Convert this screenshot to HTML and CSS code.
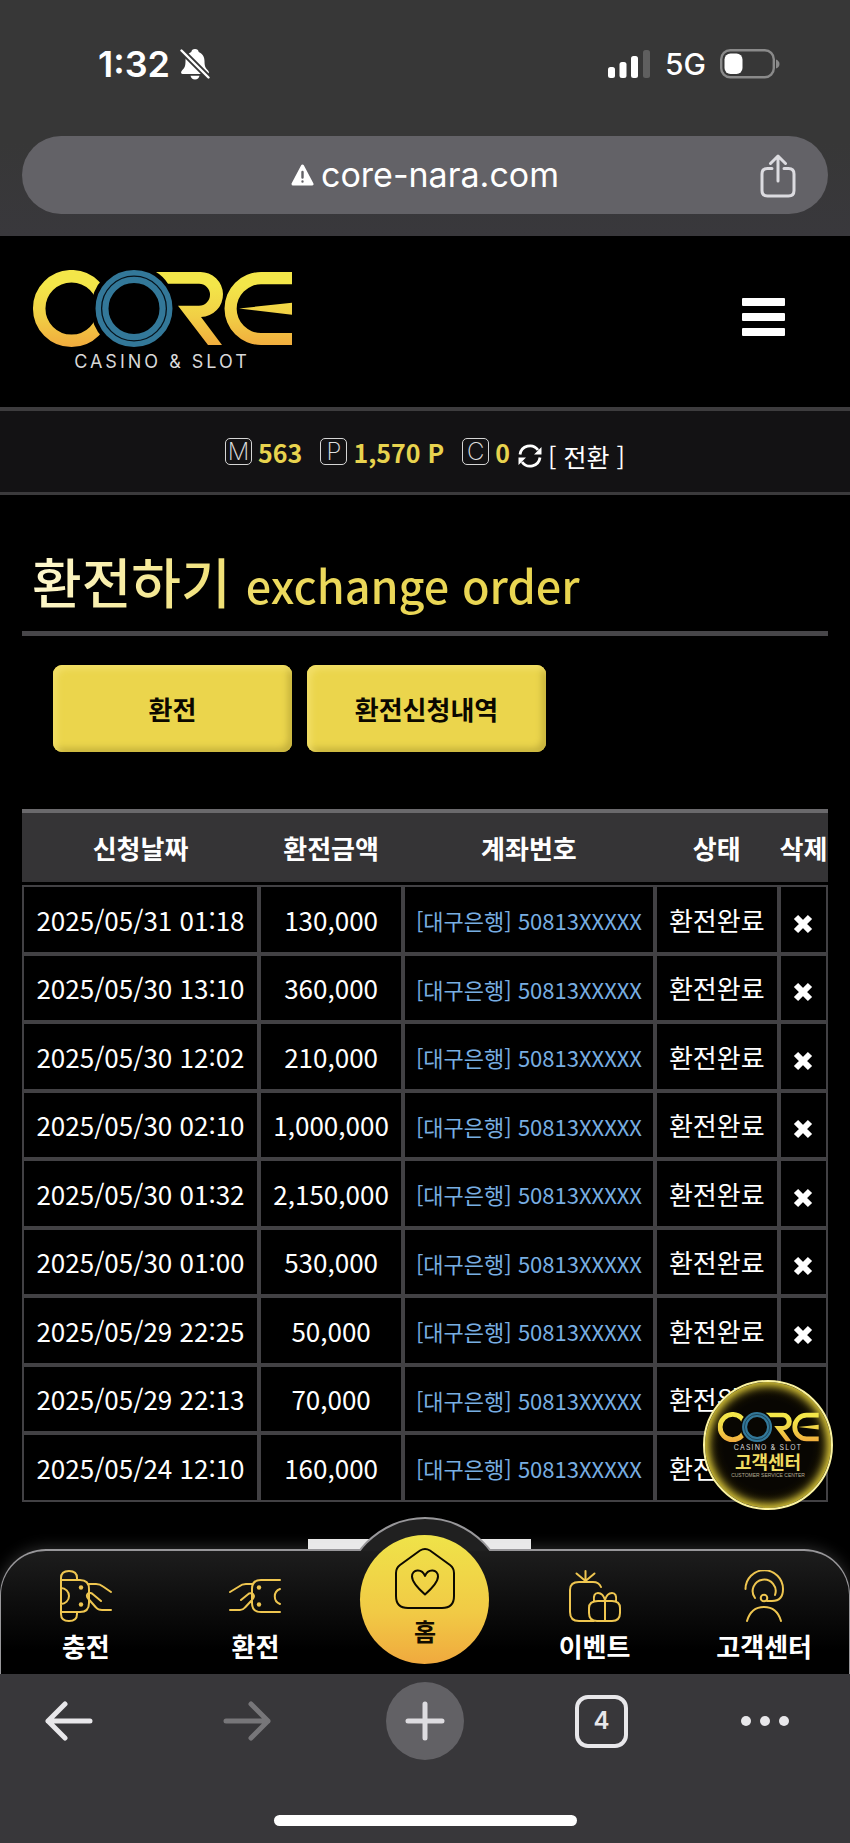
FILE: index.html
```
<!DOCTYPE html>
<html lang="ko">

<head>
  <meta charset="UTF-8" />
  <meta name="viewport" content="width=device-width, initial-scale=1.0" />
  <title>CORE - 환전하기</title>
  <link rel="stylesheet" href="styles.css">
</head>

<body>
  <!-- Shared logo -->
  <svg class="defs" aria-hidden="true">
    <defs>
      <linearGradient id="gold" gradientUnits="userSpaceOnUse" x1="0" y1="0" x2="0" y2="77">
        <stop offset="0.2" stop-color="#f3e649" />
        <stop offset="0.6" stop-color="#f1cf45" />
        <stop offset="1" stop-color="#f1ab3d" />
      </linearGradient>
      <mask id="cut" maskUnits="userSpaceOnUse" x="0" y="0" width="90" height="80">
        <rect width="90" height="80" fill="#fff" />
        <circle cx="102" cy="38.5" r="43" fill="#000" />
      </mask>
      <symbol id="logo" viewBox="0 0 260 100">
        <circle cx="39.5" cy="38.5" r="32.3" fill="none" stroke="url(#gold)" stroke-width="12.5" mask="url(#cut)" />
        <circle cx="102" cy="38.5" r="32" fill="none" stroke="#337899" stroke-width="13" />
        <circle cx="102" cy="38.5" r="32.4" fill="none" stroke="#06131c" stroke-width="1.3" />
        <path fill="url(#gold)" d="M124 2H168A22.5 22.5 0 0 1 169 47L190 75H176L146 35.7H167A11 11 0 0 0 167 13.7H136Q131 6 124 2Z" />
        <path fill="url(#gold)" d="M260 2H229A36.5 36.5 0 0 0 229 75H260V63H229A24.3 24.3 0 0 1 229 14.3H260ZM207 38.5L260 32.7V44.7Z" />
        <text class="logo-sub" x="130" y="98" text-anchor="middle">CASINO &amp; SLOT</text>
      </symbol>
    </defs>
  </svg>

  <!-- Browser top -->
  <div class="browser-top">
    <div class="status">
      <div class="clock">
        <span>1:32</span>
        <svg width="30" height="32" viewBox="0 0 30 32">
          <path fill="#fff" d="M15 1C12.800 1 11.500 2 11.300 4C7.500 5.500 5.500 9 5.500 13C5.500 18.500 4.500 20 2 22.500C.5 24 .8 26 2.800 26H27.200C29.200 26 29.500 24 28 22.500C25.500 20 24.500 18.500 24.500 13C24.500 9 22.500 5.500 18.700 4C18.500 2 17.200 1 15 1ZM10.500 27.800H19.500C19 30 17.500 31.500 15 31.500S11 30 10.500 27.800Z" />
          <path stroke="#373737" stroke-width="6" d="M1 2L29 30" />
          <path stroke="#fff" stroke-width="2.400" stroke-linecap="round" d="M1.500 2.500L28.500 29.500" />
        </svg>
      </div>
      <div class="signal">
        <svg width="43" height="28" viewBox="0 0 43 28" fill="#fff">
          <rect y="17" width="7" height="11" rx="2.500" />
          <rect x="11.500" y="12" width="7" height="16" rx="2.500" />
          <rect x="23" y="6" width="7" height="22" rx="2.500" />
          <rect x="35" width="7" height="28" rx="2.500" fill="#5f5f5f" />
        </svg>
        <span>5G</span>
        <svg width="60" height="30" viewBox="0 0 60 30">
          <rect x="1.200" y="1.200" width="52.600" height="27" rx="9" fill="none" stroke="#8a8a8a" stroke-width="2.400" />
          <rect x="4.500" y="4.500" width="18" height="20.500" rx="6" fill="#fff" />
          <path fill="#8a8a8a" d="M56 10.500Q59.500 12 59.500 15T56 19.500Z" />
        </svg>
      </div>
    </div>
    <div class="address">
      <svg width="23" height="22" viewBox="0 0 23 22">
        <path fill="#fff" stroke="#fff" stroke-width="3" stroke-linejoin="round" d="M11.500 2L21 20H2Z" />
        <path stroke="#636267" stroke-width="2.400" stroke-linecap="round" d="M11.500 8V13.500M11.500 17.500V17.600" />
      </svg>
      <span>core-nara.com</span>
      <button class="share" aria-label="공유">
        <svg width="36" height="44" viewBox="0 0 36 44" fill="none" stroke="#dcdbe0" stroke-width="3" stroke-linecap="round" stroke-linejoin="round">
          <path d="M12 14.500H7.500Q2 14.500 2 20V36.500Q2 42 7.500 42H28.500Q34 42 34 36.500V20Q34 14.500 28.500 14.500H24M18 27V2.500M10.500 9.500L18 2L25.500 9.500" />
        </svg>
      </button>
    </div>
  </div>

  <!-- Page -->
  <div class="page">
    <header class="header">
      <a href="#" aria-label="CORE"><svg class="logo"><use href="#logo" /></svg></a>
      <button class="menu" aria-label="메뉴"><i></i><i></i><i></i></button>
    </header>

    <div class="wallet">
      <div class="point"><span class="mark">M</span><b>563</b></div>
      <div class="point"><span class="mark">P</span><b>1,570 P</b></div>
      <div class="point"><span class="mark">C</span><b>0</b></div>
      <button class="convert">
        <svg width="24" height="24" viewBox="0 0 24 24">
          <path fill="none" stroke="#fff" stroke-width="2.800" d="M2 10.500A10 10 0 0 1 20 6M22 13.500A10 10 0 0 1 4 18" />
          <path fill="#fff" d="M23.500 3V10.500H16ZM.5 21V13.500H8Z" />
        </svg>
        <span>[ 전환 ]</span>
      </button>
    </div>

    <main class="content">
      <h1 class="title"><span>환전하기 <small>exchange order</small></span></h1>

      <div class="tabs">
        <button>환전</button>
        <button>환전신청내역</button>
      </div>

      <table class="list">
        <colgroup>
          <col class="c-date"><col class="c-money"><col class="c-bank"><col class="c-state"><col class="c-del">
        </colgroup>
        <thead>
          <tr><th>신청날짜</th><th>환전금액</th><th>계좌번호</th><th>상태</th><th>삭제</th></tr>
        </thead>
        <tbody id="rows"></tbody>
      </table>

      <div class="paging"></div>
    </main>
  </div>

  <!-- Bottom menu -->
  <div class="dock">
    <a class="center-link" href="#">
      <svg class="center-logo"><use href="#logo" /></svg>
      <strong>고객센터</strong>
      <small>CUSTOMER SERVICE CENTER</small>
    </a>
    <div class="hump"></div>
    <nav class="nav">
      <a href="#">
        <svg width="52" height="52" viewBox="0 0 52 52">
          <path d="M1 10H20Q29 10 29 19V33Q29 42 20 42H1ZM1 10V8Q1 1 9 1T17 8V10M1 42V44Q1 51 9 51T17 44V42M1 18A8 8 0 0 1 1 34M28 14H36Q40 14 43 16.500L51 22M41 31L32 23.500Q28 21.500 27 25Q26.500 27 28.500 29L36 37.500Q38 40 42 40H51" />
          <g class="dot"><circle cx="21" cy="17.500" r="2.200" /><circle cx="21" cy="34.500" r="2.200" /></g>
        </svg>
        <span>충전</span>
      </a>
      <a href="#">
        <svg width="52" height="52" viewBox="0 0 52 52">
          <path d="M51 10H32Q23 10 23 19V33Q23 42 32 42H51M51 19A8 8 0 0 0 51 34M24 14H17Q13 14 10 16.500L1 22M12 30L20 23.500Q24 22.500 25 26Q25 28 23 30L16 37.500Q14 40 11 40H1" />
          <g class="dot"><circle cx="30" cy="17.500" r="2.200" /><circle cx="30" cy="34.500" r="2.200" /></g>
        </svg>
        <span>환전</span>
      </a>
      <a class="home" href="#">
        <svg width="62" height="62" viewBox="0 0 62 62">
          <path d="M6 18L26 3.500Q31 .5 36 3.500L56 18Q60 21 60 26V49Q60 61 48 61H14Q2 61 2 49V26Q2 21 6 18ZM31 47.500Q18 36 18 29.500C18 22 28 21 31 29C34 21 44 22 44 29.500Q44 36 31 47.500Z" />
        </svg>
        <span>홈</span>
      </a>
      <a href="#">
        <svg width="52" height="52" viewBox="0 0 52 52">
          <path d="M25 51H10Q1 51 1 42V20Q1 12 10 12H24Q30 12 32 17M16.500 11V1M16.500 11L7.500 3.500M16.500 11L25.500 3.500M29 31H43Q51 31 51 38V43Q51 51 43 51H28Q20 51 20 43V38Q20 31 29 31ZM36 31V51M36 30Q34 23 29 23T25 31M36 30Q38 23 43 23T47 31" />
        </svg>
        <span>이벤트</span>
      </a>
      <a href="#">
        <svg width="52" height="52" viewBox="0 0 52 52">
          <path d="M7.500 19A18.500 18.500 0 0 1 45 19C45 27 41 31 34 31H29M17 28A11.500 11.500 0 1 1 37 25M9 51Q13 37 26 37T43 51" />
          <circle cx="26" cy="28" r="3.300" />
        </svg>
        <span>고객센터</span>
      </a>
    </nav>
  </div>

  <!-- Browser bottom -->
  <div class="browser-bottom">
    <div class="tools">
      <div class="side left">
        <button aria-label="뒤로">
          <svg width="48" height="40" viewBox="0 0 48 40" fill="none" stroke="#e8e7ea" stroke-width="5" stroke-linecap="round" stroke-linejoin="round"><path d="M45 20H3M20 3L3 20L20 37" /></svg>
        </button>
        <button aria-label="앞으로">
          <svg width="48" height="40" viewBox="0 0 48 40" fill="none" stroke="#777679" stroke-width="5" stroke-linecap="round" stroke-linejoin="round"><path d="M3 20H45M28 3L45 20L28 37" /></svg>
        </button>
      </div>
      <button class="plus" aria-label="새 탭">
        <svg width="40" height="40" viewBox="0 0 40 40" stroke="#dddce0" stroke-width="5" stroke-linecap="round"><path d="M20 3V37M3 20H37" /></svg>
      </button>
      <div class="side right">
        <button class="count">4</button>
        <button aria-label="더보기">
          <svg width="48" height="40" viewBox="0 0 48 40" fill="#e8e7ea"><circle cx="5" cy="20" r="5" /><circle cx="24" cy="20" r="5" /><circle cx="43" cy="20" r="5" /></svg>
        </button>
      </div>
    </div>
    <div class="indicator"></div>
  </div>

  <script>
    const orders = [
      ["2025/05/31 01:18", "130,000"],
      ["2025/05/30 13:10", "360,000"],
      ["2025/05/30 12:02", "210,000"],
      ["2025/05/30 02:10", "1,000,000"],
      ["2025/05/30 01:32", "2,150,000"],
      ["2025/05/30 01:00", "530,000"],
      ["2025/05/29 22:25", "50,000"],
      ["2025/05/29 22:13", "70,000"],
      ["2025/05/24 12:10", "160,000"]
    ];

    document.getElementById("rows").innerHTML = orders.map(([date, money]) => `
      <tr>
        <td>${date}</td>
        <td>${money}</td>
        <td><a href="#">[대구은행] 50813XXXXX</a></td>
        <td>환전완료</td>
        <td><button aria-label="삭제"><svg width="20" height="20" viewBox="0 0 20 20"><path d="M3 3L17 17M17 3L3 17" /></svg></button></td>
      </tr>`).join("");
  </script>
</body>

</html>
```

FILE: styles.css
```
* {
  box-sizing: border-box;
  margin: 0;
  padding: 0;
}

body {
  display: flex;
  flex-direction: column;
  height: 100vh;
  background-color: #000;
  color: #fff;
  font-family: 'Noto Sans CJK KR', sans-serif;
  font-size: 26px;
  line-height: 36px;
}

a {
  color: inherit;
  text-decoration: none;
}

button {
  border: none;
  background: none;
  color: inherit;
  font: inherit;
  cursor: pointer;
}

svg {
  display: block;
}

.defs {
  position: absolute;
  width: 0;
  height: 0;
}

/* Browser top */
.browser-top {
  flex: none;
  height: 236px;
  padding: 44px 22px 0;
  background: linear-gradient(#373737 60%, #39383c);
  font-family: Inter, sans-serif;
}

.status {
  display: flex;
  justify-content: space-between;
  align-items: center;
  height: 40px;
  margin-bottom: 52px;
  padding: 0 48px 0 76px;
}

.clock,
.signal {
  display: flex;
  align-items: center;
}

.clock {
  gap: 10px;
  font-size: 36px;
  font-weight: 600;
}

.signal {
  gap: 14px;
  font-size: 30px;
  font-weight: 500;
}

.address {
  position: relative;
  display: flex;
  justify-content: center;
  align-items: center;
  gap: 7px;
  height: 78px;
  border-radius: 39px;
  background-color: #636267;
  font-size: 34px;
}

.share {
  position: absolute;
  top: 18px;
  right: 32px;
}

/* Header */
.page {
  flex: 1;
  min-height: 0;
  overflow-y: auto;
  scrollbar-width: none;
}

.header {
  display: flex;
  justify-content: space-between;
  align-items: flex-start;
  height: 175px;
  padding: 34px 65px 0 32px;
  border-bottom: 4px solid #3d3c3e;
}

.logo {
  width: 260px;
  height: 100px;
}

.logo-sub {
  fill: #d8d8d8;
  font-family: Inter, sans-serif;
  font-size: 18px;
  letter-spacing: 3px;
}

.menu {
  display: grid;
  gap: 7px;
  margin-top: 28px;
}

.menu i {
  width: 43px;
  height: 8px;
  border-radius: 1px;
  background-color: #fff;
}

/* Wallet */
.wallet {
  display: flex;
  justify-content: center;
  align-items: center;
  height: 84px;
  border-bottom: 3px solid #3b3a3c;
  background-color: #131214;
}

.point {
  display: flex;
  align-items: center;
  gap: 6px;
  margin-right: 18px;
}

.point:nth-child(3) {
  margin-right: 8px;
}

.point b {
  color: #e8d34e;
  font-size: 25px;
  font-weight: 700;
}

.mark {
  width: 27px;
  height: 27px;
  border: 1px solid #d5d5d5;
  border-radius: 5px;
  color: #e0e0e0;
  font-family: Inter, sans-serif;
  font-size: 24px;
  font-weight: 200;
  line-height: 25px;
  text-align: center;
}

.convert {
  display: flex;
  align-items: center;
  gap: 6px;
  padding-top: 8px;
  font-size: 25px;
}

/* Content */
.content {
  padding: 0 22px;
}

.title {
  height: 141px;
  padding: 46px 10px 0;
  border-bottom: 5px solid #474649;
  font-size: 54px;
  font-weight: 500;
  line-height: 80px;
}

.title span {
  background: linear-gradient(100deg, #fff9d2, #ecd95d 45%, #e8d44e);
  -webkit-background-clip: text;
  background-clip: text;
  color: transparent;
}

.title small {
  font-size: 45px;
}

.tabs {
  display: flex;
  gap: 15px;
  padding: 29px 31px 57px;
}

.tabs button {
  width: 239px;
  height: 87px;
  border-radius: 9px;
  background-color: #ebd54c;
  box-shadow: inset 4px 4px 6px #f2df68, inset -4px -4px 6px #c6b23d;
  color: #0b0800;
  font-weight: 700;
}

/* Order list */
.list {
  width: 100%;
  border-spacing: 0;
  border-top: 4px solid #6a696c;
  table-layout: fixed;
  text-align: center;
  white-space: nowrap;
}

.c-date {
  width: 29.4%;
}

.c-money {
  width: 17.9%;
}

.c-bank {
  width: 31.2%;
}

.c-state {
  width: 15.4%;
}

.c-del {
  width: 6.1%;
}

.list th {
  height: 72px;
  border-bottom: 3px solid #000;
  background-color: #353436;
  font-weight: 700;
}

.list td {
  height: 68px;
  border: 2px solid #424144;
}

.list tr:nth-child(odd) td {
  height: 69px;
}

.list td a {
  color: #78aee2;
  font-size: 22px;
}

.list td button {
  display: block;
  margin: 8px auto 0;
}

.list td svg {
  stroke: #fff;
  stroke-width: 6;
}

.paging {
  width: 235px;
  height: 60px;
  margin: 37px auto 0;
  padding-right: 12px;
  background-color: #e8e8e8;
  background-clip: content-box;
}

/* Bottom menu */
.dock {
  position: relative;
  flex: none;
}

.nav {
  display: grid;
  grid-template-columns: repeat(5, 1fr);
  height: 125px;
  padding-top: 19px;
  border: 1px solid #98979a;
  border-top-width: 2px;
  border-bottom: none;
  border-radius: 46px 46px 0 0;
  background: linear-gradient(#1d1d1d, #000 80%);
  box-shadow: 0 0 16px rgba(255, 255, 255, 0.2);
}

.nav a {
  display: flex;
  flex-direction: column;
  align-items: center;
  gap: 6px;
  font-weight: 700;
}

.nav svg {
  fill: none;
  stroke: #efc650;
  stroke-width: 2;
  stroke-linecap: round;
  stroke-linejoin: round;
}

.nav .dot {
  fill: #efc650;
  stroke: none;
}

/* rounded top behind the home button */
.hump {
  position: absolute;
  top: -32px;
  left: calc(50% - 84px);
  z-index: 1;
  width: 168px;
  height: 34px;
  overflow: hidden;
}

.hump::before {
  content: "";
  display: block;
  height: 168px;
  border: 2px solid #98979a;
  border-radius: 50%;
  background-color: #202020;
}

.nav .home {
  z-index: 2;
  justify-self: center;
  gap: 4px;
  width: 129px;
  height: 129px;
  margin-top: -35px;
  padding-top: 12px;
  border-radius: 50%;
  background: linear-gradient(#efe349, #f1ca45 60%, #f0a93e);
  color: #120c00;
  font-size: 24px;
}

.nav .home svg {
  stroke: #0d0a00;
}

/* Customer center button */
.center-link {
  position: absolute;
  right: 17px;
  bottom: calc(100% + 39px);
  display: flex;
  flex-direction: column;
  align-items: center;
  width: 130px;
  height: 130px;
  padding-top: 30px;
  border: 2px solid #fbf3a0;
  border-radius: 50%;
  background: radial-gradient(#080602 50%, #2a2204 85%);
  box-shadow: inset 0 0 8px 4px #dfcb3a;
}

.center-logo {
  width: 102px;
  height: 39px;
}

.center-link strong {
  color: #f0dc60;
  font-size: 18px;
  line-height: 20px;
}

.center-link small {
  color: #b5ae96;
  font-family: 'Liberation Sans', sans-serif;
  font-size: 5px;
  line-height: 8px;
}

/* Browser bottom */
.browser-bottom {
  position: relative;
  flex: none;
  height: 169px;
  padding-top: 8px;
  background-color: #38373a;
}

.tools {
  display: grid;
  grid-template-columns: 1fr auto 1fr;
  align-items: center;
}

.side {
  display: flex;
  align-items: center;
}

.left {
  gap: 130px;
  padding-left: 45px;
}

.right {
  justify-content: flex-end;
  gap: 113px;
  padding-right: 61px;
}

.plus {
  display: grid;
  place-items: center;
  width: 78px;
  height: 78px;
  border-radius: 50%;
  background-color: #626165;
}

.count {
  width: 53px;
  height: 53px;
  border: 4px solid #e8e7ea;
  border-radius: 13px;
  color: #e8e7ea;
  font-family: Inter, sans-serif;
  font-size: 24px;
  font-weight: 600;
}

.indicator {
  width: 303px;
  height: 11px;
  margin: 55px auto 0;
  border-radius: 6px;
  background-color: #fff;
}
```
